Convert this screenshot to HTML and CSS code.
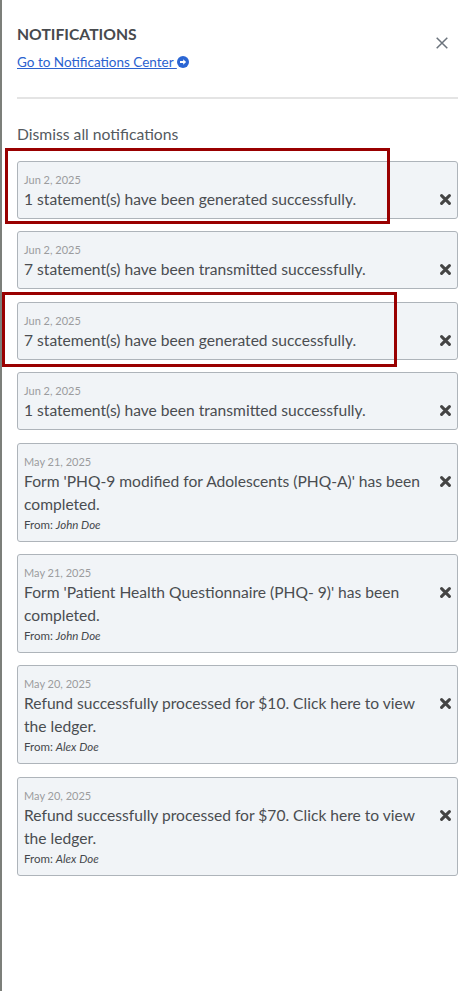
FILE: index.html
```html
<!DOCTYPE html>
<html lang="en">
<head>
<meta charset="utf-8">
<title>Notifications</title>
<link rel="stylesheet" href="styles.css">
</head>
<body>
<div class="backdrop"></div>
<aside class="panel">
  <header class="header">
    <div class="header-text">
      <h2 class="title">NOTIFICATIONS</h2>
      <a class="center-link" href="#">Go to Notifications Center <svg class="link-icon" viewBox="0 0 12 12" width="12" height="12"><circle cx="6" cy="6" r="6" fill="#2b66d4"/><path d="M3 5h3.2V3.2L9.1 6 6.2 8.8V7H3z" fill="#fff"/></svg></a>
    </div>
    <button class="close" aria-label="Close"><svg viewBox="0 0 12 12" width="12" height="12"><path d="M0.7 0.7L11.3 11.3M11.3 0.7L0.7 11.3" stroke="#6b737c" stroke-width="1.5" fill="none"/></svg></button>
  </header>
  <hr class="divider">
  <div class="dismiss-all">Dismiss all notifications</div>

  <ul class="list">
    <li class="card">
      <div class="card-body">
        <div class="date">Jun 2, 2025</div>
        <div class="message">1 statement(s) have been generated successfully.</div>
      </div>
      <div class="card-action"><svg viewBox="0 0 11 11" width="11" height="11"><path d="M1.6 1.6L9.4 9.4M9.4 1.6L1.6 9.4" stroke="#444" stroke-width="3" stroke-linecap="round" fill="none"/></svg></div>
    </li>
    <li class="card">
      <div class="card-body">
        <div class="date">Jun 2, 2025</div>
        <div class="message">7 statement(s) have been transmitted successfully.</div>
      </div>
      <div class="card-action"><svg viewBox="0 0 11 11" width="11" height="11"><path d="M1.6 1.6L9.4 9.4M9.4 1.6L1.6 9.4" stroke="#444" stroke-width="3" stroke-linecap="round" fill="none"/></svg></div>
    </li>
    <li class="card">
      <div class="card-body">
        <div class="date">Jun 2, 2025</div>
        <div class="message">7 statement(s) have been generated successfully.</div>
      </div>
      <div class="card-action"><svg viewBox="0 0 11 11" width="11" height="11"><path d="M1.6 1.6L9.4 9.4M9.4 1.6L1.6 9.4" stroke="#444" stroke-width="3" stroke-linecap="round" fill="none"/></svg></div>
    </li>
    <li class="card">
      <div class="card-body">
        <div class="date">Jun 2, 2025</div>
        <div class="message">1 statement(s) have been transmitted successfully.</div>
      </div>
      <div class="card-action"><svg viewBox="0 0 11 11" width="11" height="11"><path d="M1.6 1.6L9.4 9.4M9.4 1.6L1.6 9.4" stroke="#444" stroke-width="3" stroke-linecap="round" fill="none"/></svg></div>
    </li>
    <li class="card">
      <div class="card-body">
        <div class="date">May 21, 2025</div>
        <div class="message">Form 'PHQ-9 modified for Adolescents (PHQ-A)' has been completed.</div>
        <div class="from">From: <em>John Doe</em></div>
      </div>
      <div class="card-action"><svg viewBox="0 0 11 11" width="11" height="11"><path d="M1.6 1.6L9.4 9.4M9.4 1.6L1.6 9.4" stroke="#444" stroke-width="3" stroke-linecap="round" fill="none"/></svg></div>
    </li>
    <li class="card">
      <div class="card-body">
        <div class="date">May 21, 2025</div>
        <div class="message">Form 'Patient Health Questionnaire (PHQ- 9)' has been completed.</div>
        <div class="from">From: <em>John Doe</em></div>
      </div>
      <div class="card-action"><svg viewBox="0 0 11 11" width="11" height="11"><path d="M1.6 1.6L9.4 9.4M9.4 1.6L1.6 9.4" stroke="#444" stroke-width="3" stroke-linecap="round" fill="none"/></svg></div>
    </li>
    <li class="card">
      <div class="card-body">
        <div class="date">May 20, 2025</div>
        <div class="message">Refund successfully processed for $10. Click here to view the ledger.</div>
        <div class="from">From: <em>Alex Doe</em></div>
      </div>
      <div class="card-action"><svg viewBox="0 0 11 11" width="11" height="11"><path d="M1.6 1.6L9.4 9.4M9.4 1.6L1.6 9.4" stroke="#444" stroke-width="3" stroke-linecap="round" fill="none"/></svg></div>
    </li>
    <li class="card">
      <div class="card-body">
        <div class="date">May 20, 2025</div>
        <div class="message">Refund successfully processed for $70. Click here to view the ledger.</div>
        <div class="from">From: <em>Alex Doe</em></div>
      </div>
      <div class="card-action"><svg viewBox="0 0 11 11" width="11" height="11"><path d="M1.6 1.6L9.4 9.4M9.4 1.6L1.6 9.4" stroke="#444" stroke-width="3" stroke-linecap="round" fill="none"/></svg></div>
    </li>
  </ul>
</aside>
<div class="highlight highlight-one"></div>
<div class="highlight highlight-two"></div>
</body>
</html>
```

FILE: styles.css
```css
* { box-sizing: border-box; }

html, body {
  margin: 0;
  height: 100%;
}

body {
  display: flex;
  font-family: Lato, "Open Sans", "Liberation Sans", sans-serif;
  background: #ffffff;
  color: #4a4a4a;
  position: relative;
  overflow: hidden;
}

.backdrop {
  width: 2px;
  flex: none;
  background: #7c7f7a;
}

.panel {
  flex: 1;
  background: #ffffff;
  padding: 25px 8px 0 15px;
}

.header {
  display: flex;
  justify-content: space-between;
  align-items: flex-start;
}

.title {
  margin: 0;
  font-size: 15.7px;
  line-height: 18px;
  font-weight: 700;
  color: #474a4e;
}

.center-link {
  display: inline-block;
  margin-top: 11px;
  font-size: 13.5px;
  line-height: 17px;
  color: #2b62cf;
  text-decoration: underline;
  text-underline-offset: 1px;
}

.link-icon {
  vertical-align: -1px;
}

.close {
  margin: 12px 10px 0 0;
  padding: 0;
  border: 0;
  background: none;
  width: 12px;
  height: 12px;
  display: block;
}

.close svg { display: block; }

.divider {
  margin: 26px 0 0 0;
  border: 0;
  height: 2px;
  background: #e4e4e4;
}

.dismiss-all {
  margin-top: 26px;
  font-size: 15.7px;
  line-height: 18px;
  color: #555a5f;
}

.list {
  list-style: none;
  margin: 18px 0 0 0;
  padding: 0;
  display: flex;
  flex-direction: column;
  gap: 12.4px;
}

.card {
  display: flex;
  background: #f1f4f7;
  border: 1px solid #aeb4ba;
  border-radius: 3px;
  padding: 9px 6px 7px 6px;
}

.card-body {
  flex: 1;
  min-width: 0;
}

.date {
  font-size: 11px;
  line-height: 17px;
  color: #9b9c9e;
}

.message {
  font-size: 15.6px;
  line-height: 23px;
  color: #4a4d51;
}

.from {
  font-size: 11.5px;
  line-height: 18px;
  color: #45484c;
}

.from em { font-style: italic; }

.card-action {
  flex: none;
  width: 14px;
  margin-left: 10px;
  margin-top: 17px;
  height: 23px;
  display: flex;
  align-items: center;
  justify-content: flex-end;
}

.card-action svg { display: block; }

.highlight {
  position: absolute;
  border: 3px solid #990000;
  pointer-events: none;
}

.highlight-one {
  left: 5px;
  top: 148px;
  width: 385px;
  height: 76px;
}

.highlight-two {
  left: 2px;
  top: 292px;
  width: 395px;
  height: 75px;
}
```
